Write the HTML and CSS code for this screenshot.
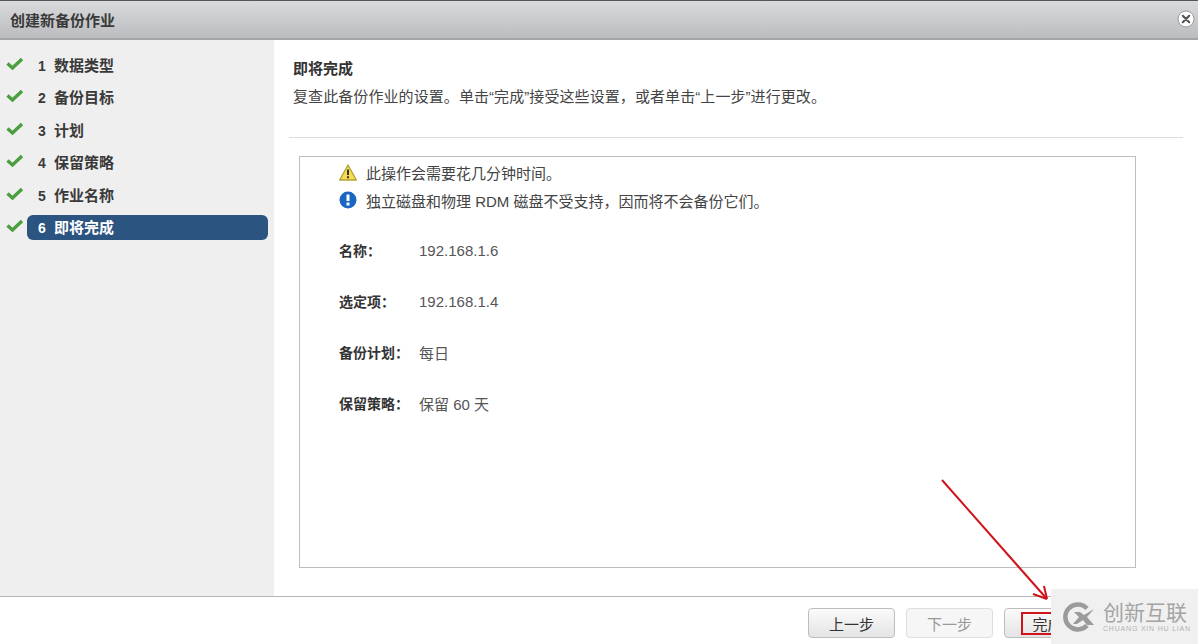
FILE: index.html
```html
<!DOCTYPE html>
<html lang="zh-CN">
<head>
    <meta charset="UTF-8">
    <title>创建新备份作业</title>
    <link rel="stylesheet" href="styles.css">
</head>
<body>
    <div class="dialog">
        <div class="titlebar">
            <span class="title">创建新备份作业</span>
            <svg class="close" width="18" height="18" viewBox="0 0 18 18">
                <circle cx="9" cy="9" r="8" fill="#fff" stroke="#9a9a9a"/>
                <path d="M5.8 5.8L12.2 12.2M12.2 5.8L5.8 12.2" stroke="#555" stroke-width="2.2" stroke-linecap="round"/>
            </svg>
        </div>
        <div class="main">
            <div class="sidebar">
                <div class="step"><svg class="check" width="18" height="14" viewBox="0 0 18 14"><path d="M1.5 6.5L6.5 11L16 2" fill="none" stroke="#4aa03f" stroke-width="3.4"/></svg><div class="step-label"><span class="num">1</span>数据类型</div></div>
                <div class="step"><svg class="check" width="18" height="14" viewBox="0 0 18 14"><path d="M1.5 6.5L6.5 11L16 2" fill="none" stroke="#4aa03f" stroke-width="3.4"/></svg><div class="step-label"><span class="num">2</span>备份目标</div></div>
                <div class="step"><svg class="check" width="18" height="14" viewBox="0 0 18 14"><path d="M1.5 6.5L6.5 11L16 2" fill="none" stroke="#4aa03f" stroke-width="3.4"/></svg><div class="step-label"><span class="num">3</span>计划</div></div>
                <div class="step"><svg class="check" width="18" height="14" viewBox="0 0 18 14"><path d="M1.5 6.5L6.5 11L16 2" fill="none" stroke="#4aa03f" stroke-width="3.4"/></svg><div class="step-label"><span class="num">4</span>保留策略</div></div>
                <div class="step"><svg class="check" width="18" height="14" viewBox="0 0 18 14"><path d="M1.5 6.5L6.5 11L16 2" fill="none" stroke="#4aa03f" stroke-width="3.4"/></svg><div class="step-label"><span class="num">5</span>作业名称</div></div>
                <div class="step"><svg class="check" width="18" height="14" viewBox="0 0 18 14"><path d="M1.5 6.5L6.5 11L16 2" fill="none" stroke="#4aa03f" stroke-width="3.4"/></svg><div class="step-label current"><span class="num">6</span>即将完成</div></div>
            </div>
            <div class="content">
                <div class="content-head">
                    <div class="heading">即将完成</div>
                    <div class="desc">复查此备份作业的设置。单击“完成”接受这些设置，或者单击“上一步”进行更改。</div>
                </div>
                <div class="summary">
                    <div class="notice">
                        <svg width="18" height="17" viewBox="0 0 18 17"><path d="M9 1L17.3 16H.7Z" fill="#f7dc4f" stroke="#b5a23a" stroke-width="1.4" stroke-linejoin="round"/><path d="M9 5.5V11" stroke="#333" stroke-width="2"/><path d="M9 12.3V14.3" stroke="#333" stroke-width="2"/></svg>
                        <span>此操作会需要花几分钟时间。</span>
                    </div>
                    <div class="notice">
                        <svg width="18" height="18" viewBox="0 0 18 18"><circle cx="9" cy="9" r="8.5" fill="#1a66c4"/><path d="M9 3.5V10" stroke="#fff" stroke-width="3"/><path d="M9 11.5V14.5" stroke="#fff" stroke-width="3"/></svg>
                        <span>独立磁盘和物理 RDM 磁盘不受支持，因而将不会备份它们。</span>
                    </div>
                    <dl class="fields">
                        <div class="field"><dt>名称：</dt><dd>192.168.1.6</dd></div>
                        <div class="field"><dt>选定项：</dt><dd>192.168.1.4</dd></div>
                        <div class="field"><dt>备份计划：</dt><dd>每日</dd></div>
                        <div class="field"><dt>保留策略：</dt><dd>保留 60 天</dd></div>
                    </dl>
                </div>
            </div>
        </div>
        <div class="footer">
            <button type="button" class="btn">上一步</button>
            <button type="button" class="btn disabled">下一步</button>
            <button type="button" class="btn">完成</button>
        </div>
    </div>

    <div class="redbox"></div>
    <svg class="arrow" width="120" height="135" viewBox="0 0 120 135">
        <path d="M2 2L107 121" stroke="#d0141c" stroke-width="2" fill="none"/>
        <path d="M107 121L93 116M107 121L104 108" stroke="#d0141c" stroke-width="2" fill="none"/>
    </svg>
    <div class="watermark">
        <svg width="32" height="34" viewBox="0 0 32 34">
            <path d="M24 8.5A12.5 12.5 0 1 0 24 25.5" fill="none" stroke="#9b9b9b" stroke-width="4.5"/>
            <path d="M11 12H17L21 15L31 9L24 17L31 25H24L20 20L14 24H10L16 17Z" fill="#9b9b9b"/>
        </svg>
        <div class="wm-text">
            <div class="wm-name">创新互联</div>
            <div class="wm-sub">CHUANG XIN HU LIAN</div>
        </div>
    </div>
</body>
</html>
```

FILE: styles.css
```css
html, body {
    margin: 0;
    height: 100%;
    overflow: hidden;
}
body {
    position: relative;
    background-color: #fff;
    color: #333;
    font-family: "Liberation Sans", "Noto Sans CJK SC", sans-serif;
    font-size: 15px;
}
.dialog {
    display: flex;
    flex-direction: column;
    height: 644px;
}
.titlebar {
    display: flex;
    align-items: center;
    justify-content: space-between;
    box-sizing: border-box;
    height: 40px;
    padding: 0 3px 0 10px;
    background: linear-gradient(#d9dadc, #bbbcbf);
    border-top: 1px solid #555;
    border-bottom: 2px solid #a5a5a7;
}
.title {
    font-weight: bold;
    color: #3a3a3a;
}
.close {
    margin-top: -2px;
}
.main {
    display: flex;
    height: 556px;
}
.sidebar {
    box-sizing: border-box;
    width: 274px;
    padding: 9px 6px 0 6px;
    background-color: #efefef;
}
.step {
    display: flex;
    align-items: center;
    height: 32.5px;
}
.check {
    flex: none;
    margin-top: -3px;
    margin-right: 3px;
}
.step-label {
    flex: 1;
    box-sizing: border-box;
    height: 25px;
    line-height: 26px;
    padding-left: 11px;
    font-weight: bold;
    color: #3a3a3a;
}
.step-label.current {
    background-color: #2b5480;
    border-radius: 6px;
    color: #fff;
}
.num {
    display: inline-block;
    width: 16px;
    font-size: 14px;
}
.content {
    flex: 1;
    padding: 0 15px;
}
.content-head {
    height: 98px;
    padding: 19px 4px 0;
    box-sizing: border-box;
    border-bottom: 1px solid #dcdcdc;
}
.heading {
    font-weight: bold;
    line-height: 20px;
}
.desc {
    margin-top: 8px;
    line-height: 20px;
    letter-spacing: 0.08px;
    color: #444;
}
.summary {
    box-sizing: border-box;
    width: 837px;
    height: 412px;
    margin: 18px 0 0 10px;
    padding: 1px 0 0 39px;
    border: 1px solid #bdbdbd;
}
.notice {
    display: flex;
    align-items: center;
    gap: 9px;
    height: 28px;
    color: #444;
}
.fields {
    margin: 10.5px 0 0;
}
.field {
    display: flex;
    align-items: center;
    height: 51px;
}
.field dt {
    width: 80px;
    font-weight: bold;
    font-size: 14px;
}
.field dd {
    margin: 0;
    color: #555;
}
.footer {
    display: flex;
    justify-content: flex-end;
    gap: 11px;
    box-sizing: border-box;
    height: 48px;
    padding: 11px 107px 0 0;
    background-color: #fff;
    border-top: 1px solid #b4b4b4;
}
.btn {
    box-sizing: border-box;
    width: 87px;
    height: 30px;
    padding: 0;
    background: linear-gradient(#fbfbfb, #e4e4e4);
    border: 1px solid #bdbdbd;
    border-radius: 4px;
    font: inherit;
    color: #333;
}
.btn.disabled {
    background: #f6f6f6;
    border-color: #dedede;
    color: #999;
}
.redbox {
    position: absolute;
    left: 1021px;
    top: 612px;
    width: 40px;
    height: 23px;
    box-sizing: border-box;
    border: 2px solid #d0141c;
}
.arrow {
    position: absolute;
    left: 940px;
    top: 478px;
}
.watermark {
    position: absolute;
    left: 1051px;
    top: 589px;
    display: flex;
    align-items: center;
    gap: 8px;
    box-sizing: border-box;
    width: 147px;
    height: 55px;
    padding-left: 12px;
    background-color: #f0f0f0;
}
.wm-name {
    font-size: 21px;
    line-height: 24px;
    color: #a4a4a4;
}
.wm-sub {
    font-size: 7px;
    line-height: 8px;
    letter-spacing: 0.8px;
    color: #b0b0b0;
    white-space: nowrap;
}
```
